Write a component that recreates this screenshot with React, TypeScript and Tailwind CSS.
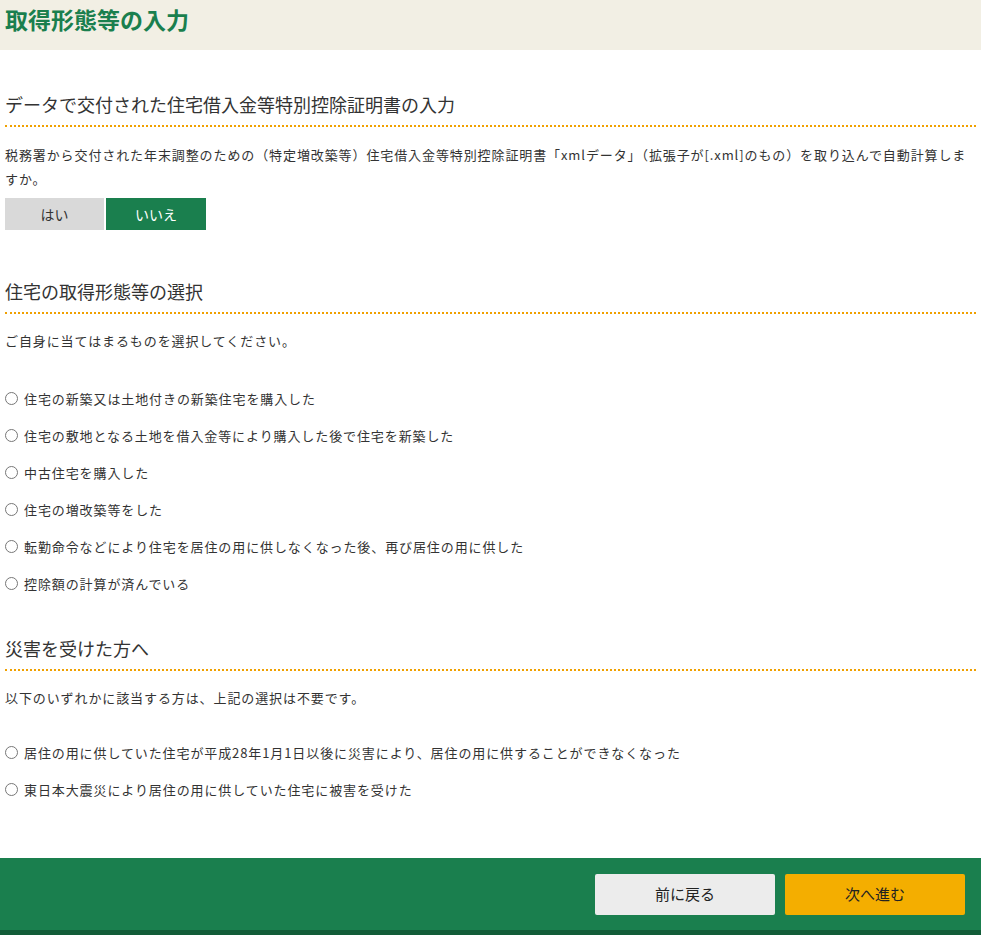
const font = { fontFamily: '"Noto Sans CJK JP", "Liberation Sans", sans-serif' };

function SectionTitle({ children }: { children: string }) {
  return (
    <h2 className="text-[18px] leading-[24px] text-[#333] pb-[9px] border-b-2 border-dotted border-[#f0a000]">
      {children}
    </h2>
  );
}

function Radio({ label }: { label: string }) {
  return (
    <label className="flex items-center h-[37px] text-[13px] tracking-[0.9px] text-[#333]">
      <span className="w-[13px] h-[13px] rounded-full border border-[#777] bg-white mr-[6px] shrink-0" />
      {label}
    </label>
  );
}

export default function App() {
  return (
    <div className="w-[981px] h-[935px] bg-white flex flex-col" style={font}>
      <div className="h-[50px] bg-[#f2efe4] flex items-center px-[5px]">
        <h1 className="text-[23px] font-bold text-[#1a7f4e] -mt-[12px]">取得形態等の入力</h1>
      </div>
      <div className="flex-1 px-[5px]">
        <div className="mt-[42px]">
          <SectionTitle>データで交付された住宅借入金等特別控除証明書の入力</SectionTitle>
          <p className="text-[13px] tracking-[0.9px] leading-[24px] text-[#333] mt-[16px]">
            税務署から交付された年末調整のための（特定増改築等）住宅借入金等特別控除証明書「xmlデータ」（拡張子が[.xml]のもの）を取り込んで自動計算しますか。
          </p>
          <div className="flex gap-[2px] mt-[7px]">
            <button className="w-[99px] h-[32px] bg-[#d9d9d9] text-[14px] text-[#333]">はい</button>
            <button className="w-[100px] h-[32px] bg-[#1a7f4e] text-[14px] text-white">いいえ</button>
          </div>
        </div>
        <div className="mt-[49px]">
          <SectionTitle>住宅の取得形態等の選択</SectionTitle>
          <p className="text-[13px] tracking-[0.9px] leading-[24px] text-[#333] mt-[15px] mb-[27px]">ご自身に当てはまるものを選択してください。</p>
          <Radio label="住宅の新築又は土地付きの新築住宅を購入した" />
          <Radio label="住宅の敷地となる土地を借入金等により購入した後で住宅を新築した" />
          <Radio label="中古住宅を購入した" />
          <Radio label="住宅の増改築等をした" />
          <Radio label="転勤命令などにより住宅を居住の用に供しなくなった後、再び居住の用に供した" />
          <Radio label="控除額の計算が済んでいる" />
        </div>
        <div className="mt-[34px]">
          <SectionTitle>災害を受けた方へ</SectionTitle>
          <p className="text-[13px] tracking-[0.9px] leading-[24px] text-[#333] mt-[15px] mb-[24px]">以下のいずれかに該当する方は、上記の選択は不要です。</p>
          <Radio label="居住の用に供していた住宅が平成28年1月1日以後に災害により、居住の用に供することができなくなった" />
          <Radio label="東日本大震災により居住の用に供していた住宅に被害を受けた" />
        </div>
      </div>
      <div className="h-[72px] bg-[#1a7f4e] flex items-center justify-end gap-[10px] pr-[16px]">
        <button className="w-[180px] h-[41px] bg-[#ececec] rounded-[2px] text-[15px] text-[#222]">前に戻る</button>
        <button className="w-[180px] h-[41px] bg-[#f4ae00] rounded-[2px] text-[15px] text-[#222]">次へ進む</button>
      </div>
      <div className="h-[5px] bg-[#125c38]" />
    </div>
  );
}
